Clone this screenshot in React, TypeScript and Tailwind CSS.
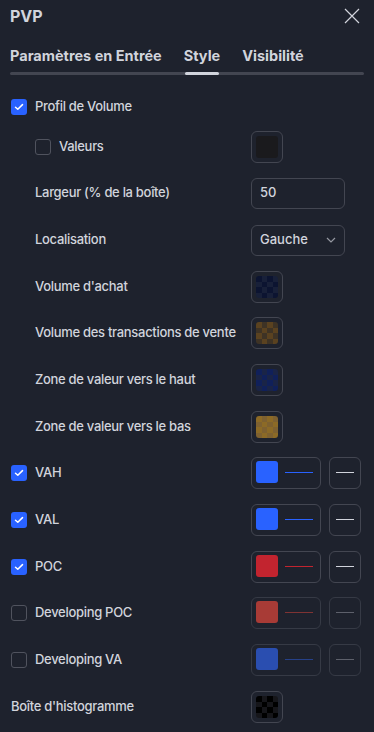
import React from 'react';

type Checker = { a: string; b: string };

const font = { fontFamily: 'Inter, "Noto Sans", sans-serif' };

const Check: React.FC<{ on: boolean }> = ({ on }) =>
  on ? (
    <div className="w-4 h-4 rounded-[3px] bg-[#2962ff] flex items-center justify-center shrink-0">
      <svg width="10" height="8" viewBox="0 0 10 8" fill="none">
        <path d="M1.5 4.2 L3.8 6.3 L8.5 1.6" stroke="#fff" strokeWidth="1.5" strokeLinecap="round" strokeLinejoin="round" />
      </svg>
    </div>
  ) : (
    <div className="w-4 h-4 rounded-[3px] border border-[#50535e] shrink-0" />
  );

const CheckerSwatch: React.FC<Checker> = ({ a, b }) => (
  <div className="w-8 h-8 rounded-[6px] border border-[#434651] flex items-center justify-center">
    <div className="w-[22px] h-[22px] rounded-[3px] overflow-hidden grid grid-cols-4 grid-rows-4">
      {Array.from({ length: 16 }).map((_, i) => {
        const r = Math.floor(i / 4);
        const c = i % 4;
        return <div key={i} style={{ background: (r + c) % 2 === 0 ? a : b }} />;
      })}
    </div>
  </div>
);

const LineSwatch: React.FC<{ color: string; dim?: boolean }> = ({ color, dim }) => (
  <div className="flex items-center gap-2">
    <div className={`w-[70px] h-8 rounded-[6px] border flex items-start pt-[3px] pl-[4px] gap-[7px] ${dim ? 'border-[#363a45]' : 'border-[#434651]'}`}>
      <div className="w-[22px] h-[22px] rounded-[3px]" style={{ background: dim ? color : color }} />
      <div className="w-[28px] h-px mt-[11px]" style={{ background: color, opacity: dim ? 0.7 : 1 }} />
    </div>
    <div className={`w-8 h-8 rounded-[6px] border flex items-start justify-center pt-[14px] ${dim ? 'border-[#363a45]' : 'border-[#434651]'}`}>
      <div className={`w-[18px] h-px ${dim ? 'bg-[#5d606b]' : 'bg-[#d1d4dc]'}`} />
    </div>
  </div>
);

const Row: React.FC<{ label: string; indent?: boolean; check?: boolean | null; children?: React.ReactNode; h?: string }> = ({
  label,
  indent,
  check = null,
  children,
  h = 'h-[46px]',
}) => (
  <div className={`flex items-center ${h}`}>
    <div className={`w-[240px] flex items-center gap-2 ${indent ? 'pl-6' : ''}`}>
      {check !== null && <Check on={check} />}
      <span className="text-[13px] font-medium tracking-[-0.3px] text-[#d1d4dc] whitespace-nowrap">{label}</span>
    </div>
    <div className="flex items-center">{children}</div>
  </div>
);

export default function App() {
  return (
    <div className="w-[374px] h-[732px] bg-[#1e222d] overflow-hidden" style={font}>
      <div className="flex items-center justify-between pl-[10px] pr-[14px] pt-[3px] h-[28px]">
        <span className="text-[16px] font-bold text-[#d1d4dc]">PVP</span>
        <svg width="16" height="16" viewBox="0 0 16 16">
          <path d="M1 1 L15 15 M15 1 L1 15" stroke="#d1d4dc" strokeWidth="1.2" />
        </svg>
      </div>
      <div className="px-[10px] mt-[18px]">
        <div className="flex gap-[22px] text-[14.5px] font-bold text-[#d1d4dc] leading-[20px]">
          <span>Paramètres en Entrée</span>
          <span>Style</span>
          <span>Visibilité</span>
        </div>
        <div className="relative mt-[6px] h-[3px] rounded-full bg-[#434651]">
          <div className="absolute left-[175px] top-0 w-[34px] h-[3px] rounded-full bg-[#d1d4dc]" />
        </div>
      </div>
      <div className="pl-[11px] mt-[15px]">
        <Row label="Profil de Volume" check={true} h="h-[34px]" />
        <Row label="Valeurs" indent check={false}>
          <div className="w-8 h-8 rounded-[6px] border border-[#434651] flex items-center justify-center">
            <div className="w-[22px] h-[22px] rounded-[3px] bg-[#1a1a1d]" />
          </div>
        </Row>
        <Row label="Largeur (% de la boîte)" indent>
          <div className="w-[94px] h-[31px] rounded-[6px] border border-[#434651] flex items-center px-2 text-[13px] font-medium text-[#d1d4dc]">50</div>
        </Row>
        <Row label="Localisation" indent h="h-[48px]">
          <div className="w-[94px] h-[31px] rounded-[6px] border border-[#434651] flex items-center justify-between pl-2 pr-[8px] text-[13px] font-medium text-[#d1d4dc]">
            <span>Gauche</span>
            <svg width="10" height="6" viewBox="0 0 10 6" fill="none">
              <path d="M1 1 L5 5 L9 1" stroke="#9598a1" strokeWidth="1.2" />
            </svg>
          </div>
        </Row>
        <Row label="Volume d'achat" indent>
          <CheckerSwatch a="#0c1431" b="#182039" />
        </Row>
        <Row label="Volume des transactions de vente" indent>
          <CheckerSwatch a="#5a4220" b="#3e3325" />
        </Row>
        <Row label="Zone de valeur vers le haut" indent h="h-[48px]">
          <CheckerSwatch a="#10205a" b="#1a2447" />
        </Row>
        <Row label="Zone de valeur vers le bas" indent>
          <CheckerSwatch a="#8c6a26" b="#7e6130" />
        </Row>
        <Row label="VAH" check={true}>
          <LineSwatch color="#2962ff" />
        </Row>
        <Row label="VAL" check={true} h="h-[48px]">
          <LineSwatch color="#2962ff" />
        </Row>
        <Row label="POC" check={true}>
          <LineSwatch color="#c2242f" />
        </Row>
        <Row label="Developing POC" check={false}>
          <LineSwatch color="#a83b36" dim />
        </Row>
        <Row label="Developing VA" check={false} h="h-[48px]">
          <LineSwatch color="#2a4eb0" dim />
        </Row>
        <Row label="Boîte d'histogramme">
          <CheckerSwatch a="#000000" b="#16161a" />
        </Row>
      </div>
    </div>
  );
}
